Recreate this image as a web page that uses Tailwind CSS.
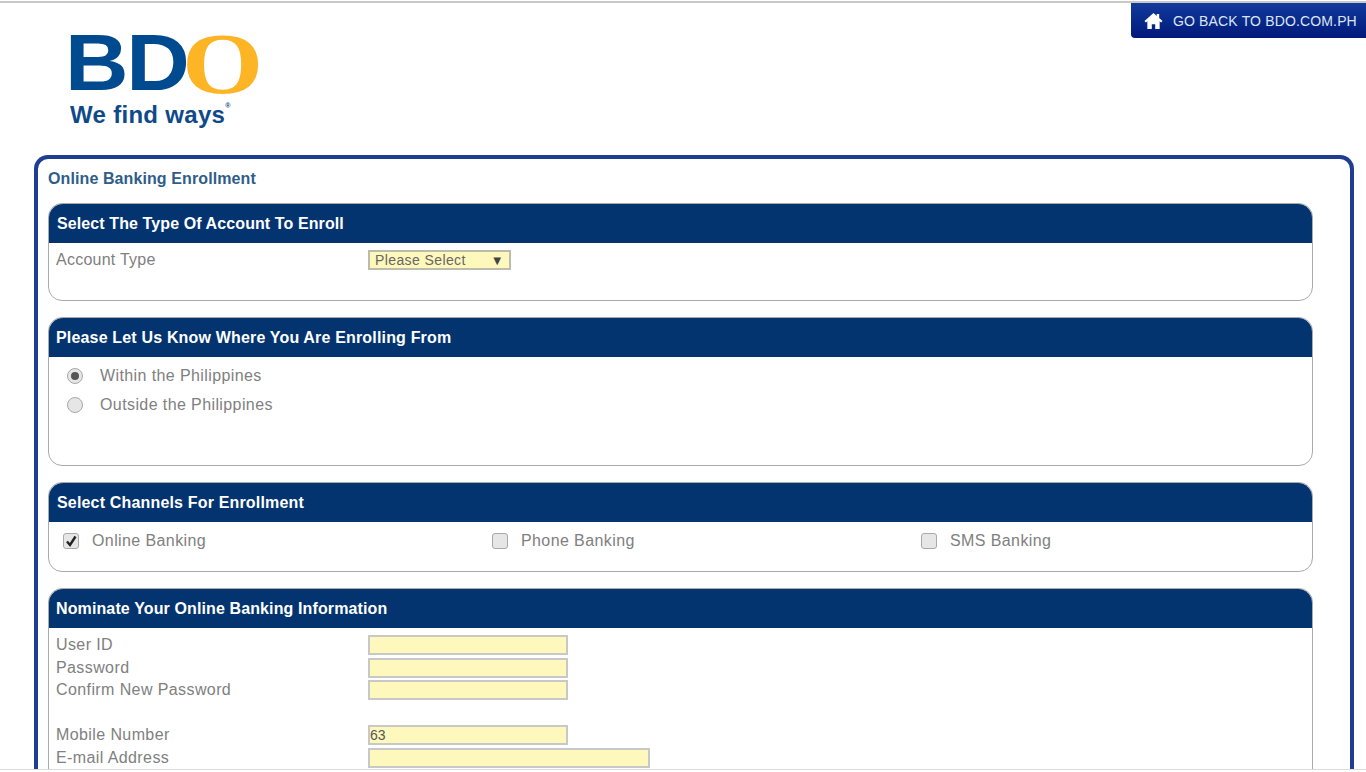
<!DOCTYPE html>
<html lang="en">
<head>
  <meta charset="UTF-8">
  <title>BDO Online Banking Enrollment</title>
  <script src="https://cdn.jsdelivr.net/npm/@tailwindcss/browser@4"></script>
</head>
<body class="h-[772px] overflow-hidden bg-white font-['Liberation_Sans',Arial,sans-serif] text-[16px] tracking-[0.4px] text-[#808080]">
  <div class="flex h-[770px] flex-col overflow-hidden border-b border-[#dcdcdc]">
    <!-- top bar + back link -->
    <div class="relative mt-px h-[154px] shrink-0 border-t-[2px] border-[#c8c8c8]">
      <a class="absolute right-0 top-0 flex h-[35px] w-[235px] items-center rounded-bl-[4px] bg-gradient-to-b from-[#123a9c] to-[#03187a] pl-[13px] text-[14px] tracking-[0.15px] text-[#dfe4f2]">
        <svg class="h-[18px] w-[19px] shrink-0" viewBox="0 0 20 19" fill="#fff"><path d="M10 1 0.5 9.6 2 11l1.5-1.3V18h4.7v-5h3.6v5h4.7V9.7L18 11l1.5-1.4-3.5-3.2V2h-2.6v2.1z"/></svg>
        <span class="mt-[2px] ml-[10px] whitespace-nowrap">GO BACK TO BDO.COM.PH</span>
      </a>
      <!-- logo -->
      <div class="ml-[70px] w-[200px] pt-[30px] tracking-normal">
        <div class="flex h-[62px] items-center">
          <span class="-mt-[3px] -ml-[5px] w-[123px] origin-left scale-x-[1.1] text-[80px] leading-[62px] font-bold tracking-[-2px] text-[#004a8f]">BD</span>
          <span class="-ml-[6px] origin-left scale-x-[1.2] font-['Liberation_Serif',serif] text-[87px] leading-[62px] font-bold text-[#fdb525]">O</span>
        </div>
        <div class="mt-[6px] flex text-[24px] leading-[28px] font-bold tracking-[0.3px] text-[#0e4a8a]">We find ways<sup class="mt-[4px] text-[7px] leading-[8px]">®</sup></div>
      </div>
    </div>

    <!-- enrollment panel -->
    <div class="mx-[34px] mr-[12px] flex-1 rounded-t-[14px] border-x-[4px] border-t-[4px] border-[#1f3d91] px-[10px]">
      <h1 class="pt-[10px] pb-[14px] text-[16px] leading-[20px] font-bold tracking-[0.1px] text-[#2f5d8a]">Online Banking Enrollment</h1>

      <div class="mr-[27px] flex flex-col gap-[16px]">
        <section class="h-[98px] rounded-[14px] border border-[#aaaaaa]">
          <h2 class="flex h-[39px] items-center rounded-t-[14px] bg-[#03346f] pl-[8px] text-[16px] font-bold tracking-[0.1px] text-white">Select The Type Of Account To Enroll</h2>
          <div class="flex pt-[6px] pl-[7px]">
            <span class="w-[312px] leading-[22px] tracking-[0.25px]">Account Type</span>
            <div class="mt-[1px] flex h-[20px] w-[143px] items-center justify-between border-2 border-[#bcbcaa] bg-[#fff8bd] pr-[5px] pl-[5px] text-[14px] text-[#666]">
              <span>Please Select</span>
              <span class="text-[13px] leading-none text-[#444]">▼</span>
            </div>
          </div>
        </section>

        <section class="h-[149px] rounded-[14px] border border-[#aaaaaa]">
          <h2 class="flex h-[39px] items-center rounded-t-[14px] bg-[#03346f] pl-[7px] text-[16px] font-bold tracking-[0.17px] text-white">Please Let Us Know Where You Are Enrolling From</h2>
          <div class="flex flex-col gap-[7px] pt-[8px] pl-[18px]">
            <label class="flex h-[22px] items-center gap-[17px]">
              <span class="flex h-[16px] w-[16px] items-center justify-center rounded-full border border-[#a8a8a8] bg-[#e6e6e6]"><span class="h-[8px] w-[8px] rounded-full bg-[#555]"></span></span>
              Within the Philippines
            </label>
            <label class="flex h-[22px] items-center gap-[17px]">
              <span class="h-[16px] w-[16px] rounded-full border border-[#a8a8a8] bg-[#e6e6e6]"></span>
              Outside the Philippines
            </label>
          </div>
        </section>

        <section class="h-[90px] rounded-[14px] border border-[#aaaaaa]">
          <h2 class="flex h-[39px] items-center rounded-t-[14px] bg-[#03346f] pl-[8px] text-[16px] font-bold tracking-[0.17px] text-white">Select Channels For Enrollment</h2>
          <div class="grid grid-cols-[429px_429px_1fr] pt-[8px] pl-[14px]">
            <label class="flex h-[22px] items-center gap-[13px]">
              <span class="flex h-[16px] w-[16px] items-center justify-center rounded-[3px] border border-[#a8a8a8] bg-[#e6e6e6]">
                <svg class="h-[12px] w-[12px]" viewBox="0 0 12 12" fill="none" stroke="#222" stroke-width="2.4"><path d="M2 6.5 5 10 10.5 1.5"/></svg>
              </span>
              Online Banking
            </label>
            <label class="flex h-[22px] items-center gap-[13px]">
              <span class="h-[16px] w-[16px] rounded-[3px] border border-[#a8a8a8] bg-[#e6e6e6]"></span>
              Phone Banking
            </label>
            <label class="flex h-[22px] items-center gap-[13px]">
              <span class="h-[16px] w-[16px] rounded-[3px] border border-[#a8a8a8] bg-[#e6e6e6]"></span>
              SMS Banking
            </label>
          </div>
        </section>

        <section class="h-[220px] rounded-[14px] border border-[#aaaaaa]">
          <h2 class="flex h-[39px] items-center rounded-t-[14px] bg-[#03346f] pl-[7px] text-[16px] font-bold tracking-[0.12px] text-white">Nominate Your Online Banking Information</h2>
          <div class="pt-[6px] pl-[7px]">
            <div class="flex h-[22.5px]"><span class="w-[312px] leading-[22px]">User ID</span><div class="mt-[1px] h-[20px] w-[200px] border-2 border-[#c8c8c8] bg-[#fff8bd]"></div></div>
            <div class="flex h-[22.5px]"><span class="w-[312px] leading-[22px]">Password</span><div class="mt-[1px] h-[20px] w-[200px] border-2 border-[#c8c8c8] bg-[#fff8bd]"></div></div>
            <div class="flex h-[22.5px]"><span class="w-[312px] leading-[22px]">Confirm New Password</span><div class="mt-[1px] h-[20px] w-[200px] border-2 border-[#c8c8c8] bg-[#fff8bd]"></div></div>
            <div class="h-[22.5px]"></div>
            <div class="flex h-[22.5px]"><span class="w-[312px] leading-[22px]">Mobile Number</span><div class="mt-[1px] flex h-[20px] w-[200px] items-center border-2 border-[#c8c8c8] bg-[#fff8bd] text-[14px] tracking-normal text-[#555]">63</div></div>
            <div class="flex h-[22.5px]"><span class="w-[312px] leading-[22px]">E-mail Address</span><div class="mt-[1px] h-[20px] w-[282px] border-2 border-[#c8c8c8] bg-[#fff8bd]"></div></div>
          </div>
        </section>
      </div>
    </div>
  </div>
</body>
</html>
